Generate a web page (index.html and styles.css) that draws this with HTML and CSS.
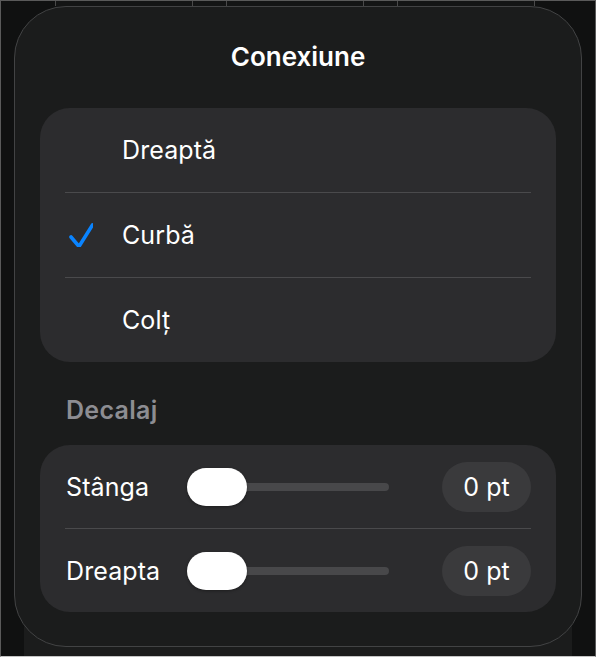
FILE: index.html
```html
<!DOCTYPE html>
<html lang="ro">
<head>
  <meta charset="UTF-8" />
  <meta name="viewport" content="width=device-width, initial-scale=1.0" />
  <title>Conexiune</title>
  <link rel="stylesheet" href="styles.css">
</head>
<body>
  <div class="screen">
    <div class="strip">
      <span class="cell cell-wide"></span>
      <span class="cell cell-narrow"></span>
      <span class="cell cell-wide"></span>
      <span class="cell cell-narrow"></span>
      <span class="cell cell-wide"></span>
    </div>

    <div class="stage">
      <section class="panel">
        <h1 class="title">Conexiune</h1>

        <ul class="group">
          <li class="row choice"><span class="mark"></span><span>Dreaptă</span></li>
          <li class="row choice selected">
            <span class="mark">
              <svg viewBox="0 0 24 24" width="24" height="24"><path d="M2 14 L10 23.5 L23.5 2" /></svg>
            </span>
            <span>Curbă</span>
          </li>
          <li class="row choice"><span class="mark"></span><span>Colț</span></li>
        </ul>

        <h2 class="section-label">Decalaj</h2>

        <div class="group">
          <div class="row offset">
            <span class="label">Stânga</span>
            <div class="slider"><span class="thumb"></span></div>
            <span class="value">0 pt</span>
          </div>
          <div class="row offset">
            <span class="label">Dreapta</span>
            <div class="slider"><span class="thumb"></span></div>
            <span class="value">0 pt</span>
          </div>
        </div>
      </section>
    </div>
  </div>
</body>
</html>
```

FILE: styles.css
```css
:root{--bg:#101111;--panel:#1b1c1c;--group:#2c2c2e;--fill:#3a3a3c;--track:#48484a;--line:#4a4a4c;--muted:#8d8d92;--blue:#0a84ff;}
*{box-sizing:border-box;margin:0;padding:0}
html,body{height:100%}
body{font-family:Inter,'Noto Sans',sans-serif;background:var(--bg);color:#fff}

.screen{height:100%;display:flex;flex-direction:column;border:1px solid #5a5a5a;border-bottom-color:#c4c4c4;background:var(--bg)}

/* table cells peeking out behind the popover */
.strip{height:5px;display:flex;margin-left:54px;width:480px;border-left:1px solid #4a4a4a;background:#141515}
.cell{border-right:1px solid #4a4a4a}
.cell-wide{width:137px}
.cell-narrow{width:34px}

.stage{flex:1;margin:0 23px;padding:0 0 9px;background:linear-gradient(#101111 0,#101111 70%,#1b1c1c 92%)}

.panel{margin:0 -10px;height:641px;background:var(--panel);border:1px solid #424344;border-radius:52px;padding:35px 25px 0}
.title{font-size:26px;line-height:30px;font-weight:600;text-align:center;margin-bottom:36px;letter-spacing:0}

.group{list-style:none;background:var(--group);border-radius:30px;padding:0 25px}
.row{height:84px;display:flex;align-items:center;font-size:25px;letter-spacing:.1px}
.row+.row{border-top:1px solid var(--line);height:85px}

.mark{width:57px;display:flex;padding-left:4px}
.mark svg{display:block}
.mark path{fill:none;stroke:var(--blue);stroke-width:3.6;stroke-linecap:round;stroke-linejoin:round}

.section-label{font-size:25px;line-height:30px;font-weight:600;color:var(--muted);margin:33px 0 20px 26px;letter-spacing:.3px}

.offset{height:83px}
.offset+.offset{height:84px}
.label{width:122px;padding-left:1px}
.slider{position:relative;width:202px;height:38px;display:flex;align-items:center}
.slider::before{content:'';display:block;width:100%;height:8px;border-radius:4px;background:var(--track)}
.thumb{position:absolute;left:0;top:0;width:60px;height:38px;border-radius:19px;background:#fff;box-shadow:0 1px 3px rgba(0,0,0,.35)}
.value{margin-left:auto;width:89px;height:50px;border-radius:25px;background:var(--fill);display:flex;align-items:center;justify-content:center}
```
